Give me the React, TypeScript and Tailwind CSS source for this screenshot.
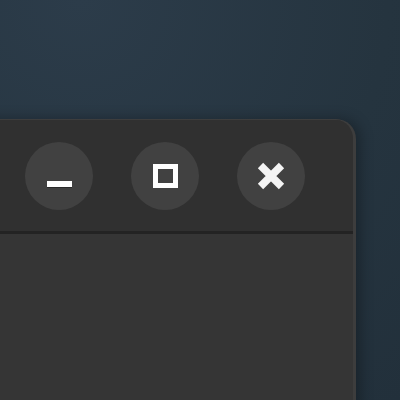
import React from 'react';

const CircleButton = ({ children }: { children: React.ReactNode }) => (
  <button className="w-[68px] h-[68px] rounded-full bg-[#414141] flex items-center justify-center shrink-0">
    {children}
  </button>
);

const App = () => {
  return (
    <div className="w-[400px] h-[400px] overflow-hidden bg-[radial-gradient(circle_at_20%_0%,#2c3c4a,#25343f_60%,#22303b)] pt-[119px]">
      <div className="ml-[-50px] w-[406px] h-[300px] rounded-tr-[20px] bg-[#353535] border-t border-r-[3px] border-[#3d3d3d] shadow-[4px_0_14px_rgba(0,0,0,0.3)] overflow-hidden">
        <div className="h-[111px] bg-[#303030] flex items-center pl-[75px] gap-[38px]">
          <CircleButton>
            <span className="block w-[25px] h-[6px] bg-white mt-[17px] shadow-[0_1px_0_#2a2a2a]" />
          </CircleButton>
          <CircleButton>
            <span className="block w-[25px] h-[24px] border-[5px] border-white" />
          </CircleButton>
          <CircleButton>
            <svg width="28" height="28" viewBox="0 0 28 28">
              <path d="M3.5 3.5 L24.5 24.5 M24.5 3.5 L3.5 24.5" stroke="#f4f4f4" strokeWidth="7.5" strokeLinecap="butt" />
            </svg>
          </CircleButton>
        </div>
        <div className="h-[3px] bg-[#232323]" />
      </div>
    </div>
  );
};

export default App;
